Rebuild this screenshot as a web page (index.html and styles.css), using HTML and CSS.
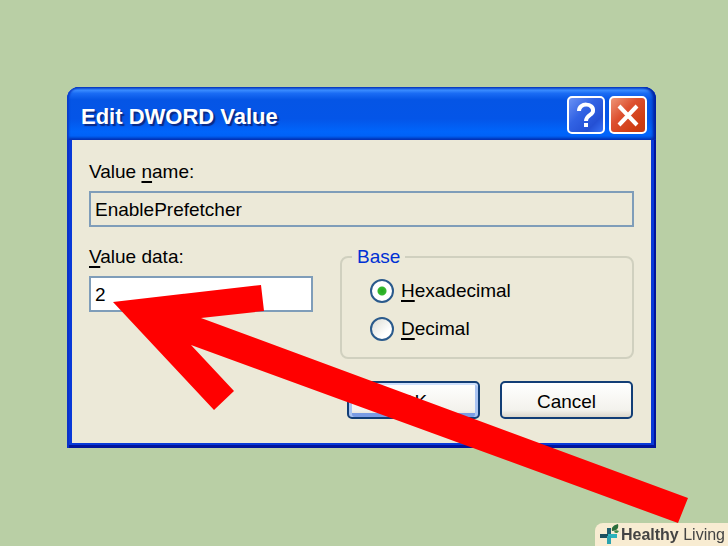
FILE: index.html
```html
<!DOCTYPE html>
<html lang="en">
<head>
    <meta charset="UTF-8">
    <meta name="viewport" content="width=device-width, initial-scale=1.0">
    <title>Edit DWORD Value</title>
    <link rel="stylesheet" href="styles.css">
</head>
<body>
    <main class="desktop">
        <form class="dialog">
            <header class="title-bar">
                <h1 class="title">Edit DWORD Value</h1>
                <button type="button" class="caption-button help" aria-label="Help">
                    <svg viewBox="0 0 34 34" width="34" height="34" fill="none" stroke="#fff" stroke-width="4">
                        <path d="M10 13 C10 4 25 5 24 13 C24 17 17 17 17 23"/>
                        <path d="M17 25 V29"/>
                    </svg>
                </button>
                <button type="button" class="caption-button close" aria-label="Close">
                    <svg viewBox="0 0 34 34" width="34" height="34" fill="none" stroke="#fff" stroke-width="4">
                        <path d="M8 8 L26 27 M26 8 L8 27"/>
                    </svg>
                </button>
            </header>
            <div class="content">
                <label class="label" for="value-name">Value <u>n</u>ame:</label>
                <input class="field readonly" type="text" id="value-name" value="EnablePrefetcher" readonly>
                <div class="columns">
                    <div class="data">
                        <label class="label" for="value-data"><u>V</u>alue data:</label>
                        <input class="field" type="text" id="value-data" value="2">
                    </div>
                    <fieldset class="base">
                        <legend class="legend">Base</legend>
                        <label class="option" for="hex">
                            <input class="radio" type="radio" name="base" id="hex" checked>
                            <span><u>H</u>exadecimal</span>
                        </label>
                        <label class="option" for="dec">
                            <input class="radio" type="radio" name="base" id="dec">
                            <span><u>D</u>ecimal</span>
                        </label>
                    </fieldset>
                </div>
                <div class="actions">
                    <button type="button" class="button default">OK</button>
                    <button type="button" class="button">Cancel</button>
                </div>
            </div>
        </form>
    </main>

    <svg class="arrow" viewBox="0 0 728 546" aria-hidden="true">
        <polygon fill="#ff0000" points="113,302 261,285 264,311 201,318 688,498 678,523 191,345 234,391 214,410"/>
    </svg>

    <div class="brand">
        <svg viewBox="0 0 20 22" width="20" height="22" aria-hidden="true">
            <path d="M9 4 V20" stroke="#1f5f70" stroke-width="4"/>
            <path d="M0 12 H17" stroke="#2bb3bd" stroke-width="4"/>
            <path d="M0 12 H8" stroke="#1d4f5e" stroke-width="4"/>
            <path d="M9 12 V20" stroke="#2ba3b0" stroke-width="4"/>
            <path d="M12 7 C11 3 14 1 18 0 C19 4 17 7 12 7 Z" fill="#2c6e3c"/>
            <path d="M14 8 C15 6 17 6 19 7 C18 9 16 10 14 8 Z" fill="#3e8a4a"/>
        </svg>
        <span><b>Healthy</b> Living</span>
    </div>
</body>
</html>
```
FILE: styles.css
```css
* {
    box-sizing: border-box;
}
body {
    margin: 0;
    min-height: 100vh;
    background-color: #b9cfa5;
    color: #000;
    font-family: "Liberation Sans", Arial, sans-serif;
    font-size: 19px;
    line-height: 24px;
}
.desktop {
    padding: 87px 72px 40px 67px;
}
.dialog {
    padding: 0 5px 5px;
    border-radius: 12px 12px 0 0;
    background-color: #0839d8;
    box-shadow: inset 2px 0 #0a32c8, inset -2px 0 #00149c, inset 0 -3px #00149c;
}
.title-bar {
    display: flex;
    align-items: center;
    gap: 4px;
    margin: 0 -5px;
    padding: 5px 9px 2px 14px;
    height: 53px;
    border-radius: 12px 12px 0 0;
    background: linear-gradient(#0a46c8 0, #3a8cff 6%, #1a6cf4 12%, #0555e5 24%, #0455e8 60%, #0065fb 84%, #0062f8 92%, #0038b8 100%);
    box-shadow: inset 2px 0 2px #0a3cc8, inset -3px 0 3px #0020a0;
}
.title {
    flex: 1;
    margin: 0;
    padding-top: 4px;
    color: #fff;
    font-size: 22px;
    line-height: 28px;
    text-shadow: 2px 2px 1px #0a2a86;
}
.caption-button {
    display: flex;
    padding: 0;
    border: 2px solid #fff;
    border-radius: 5px;
    width: 38px;
    height: 38px;
}
.help {
    background: linear-gradient(135deg, #6b92f4, #3263e4 40%, #2450d4 75%, #3a72f6);
}
.close {
    background: linear-gradient(135deg, #ee9678, #dd5030 40%, #cf3c12 80%, #c23a14);
}
.content {
    padding: 20px 17px 24px;
    background-color: #ece9d8;
}
.label {
    display: block;
    margin-bottom: 7px;
}
u {
    text-decoration-thickness: 2px;
    text-underline-offset: 3px;
    text-decoration-skip-ink: none;
}
.field {
    display: block;
    width: 100%;
    height: 36px;
    padding: 2px 4px 0;
    border: 2px solid #7f9db9;
    background-color: #fff;
    color: #000;
    font: inherit;
}
.readonly {
    background-color: #ece9d8;
}
.columns {
    display: flex;
    gap: 27px;
    margin-top: 18px;
}
.data {
    flex: 0 1 224px;
}
.base {
    flex: 1;
    margin: 0;
    padding: 10px 28px 16px;
    border: 2px solid #d0d0bf;
    border-radius: 8px;
}
.legend {
    margin-left: -18px;
    padding: 0 5px;
    color: #0030d4;
}
.option {
    display: flex;
    align-items: center;
    gap: 7px;
}
.option + .option {
    margin-top: 14px;
}
.radio {
    appearance: none;
    margin: 0;
    width: 24px;
    height: 24px;
    border: 2px solid #2a5a8c;
    border-radius: 50%;
    background: linear-gradient(135deg, #dcdcd4, #fff 70%);
}
.radio:checked {
    background: radial-gradient(circle, #22a81e 0, #35b830 4px, #fff 5px);
}
.actions {
    display: flex;
    justify-content: flex-end;
    gap: 20px;
    margin-top: 22px;
    padding-right: 1px;
}
.button {
    width: 133px;
    height: 38px;
    padding: 3px 0 0;
    border: 2px solid #123e76;
    border-radius: 5px;
    background: linear-gradient(#fff, #f3f2ec 80%, #dcd7cb);
    color: #000;
    font: inherit;
}
.default {
    box-shadow: inset 0 2px #cee0fc, inset 3px 0 #aac4f2, inset -3px 0 #aac4f2, inset 0 -4px #7a9ce4;
}
.arrow {
    position: absolute;
    top: 0;
    left: 0;
    width: 100%;
    pointer-events: none;
}
.brand {
    position: fixed;
    right: 0;
    bottom: 0;
    display: flex;
    align-items: center;
    gap: 1px;
    height: 23px;
    padding: 0 3px 0 5px;
    border-top-left-radius: 8px;
    background-color: #f8ecd2;
    color: #444;
    font-size: 16px;
}
```
